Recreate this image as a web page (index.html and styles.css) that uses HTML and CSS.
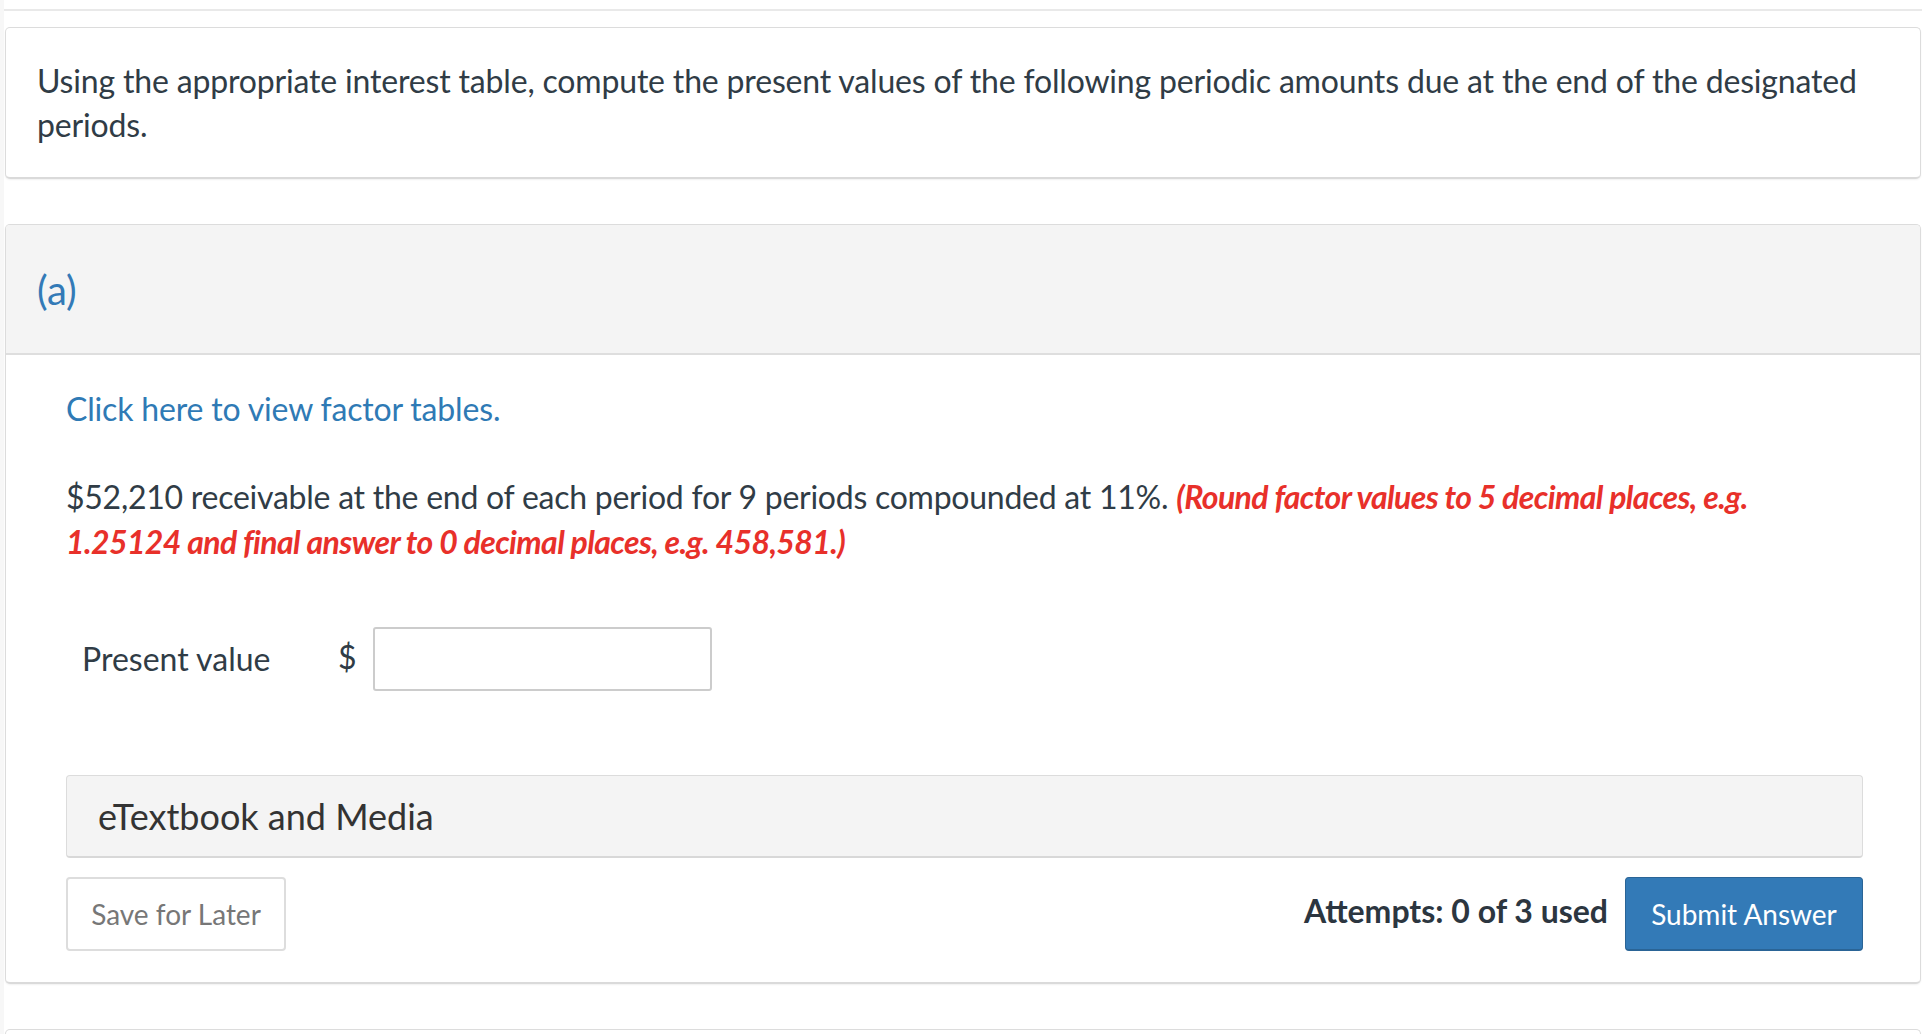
FILE: index.html
```html
<!DOCTYPE html>
<html lang="en">
<head>
<meta charset="utf-8">
<title>Present value question</title>
<link rel="stylesheet" href="styles.css">
</head>
<body>
<div class="page">
  <div class="top-rule"></div>

  <section class="card intro">
    <p>Using the appropriate interest table, compute the present values of the following periodic amounts due at the end of the designated periods.</p>
  </section>

  <section class="card part">
    <header class="part-head">(a)</header>
    <div class="part-body">
      <p class="tables-link"><a href="#">Click here to view factor tables.</a></p>
      <p class="question">$52,210 receivable at the end of each period for 9 periods compounded at 11%. <em class="hint">(Round factor values to 5 decimal places, e.g. </em><em class="hint">1.25124 and final answer to 0 decimal places, e.g. 458,581.)</em></p>

      <div class="answer-row">
        <label class="answer-label" for="pv">Present value</label>
        <span class="currency">$</span>
        <input id="pv" class="answer-input" type="text">
      </div>

      <div class="media-panel">eTextbook and Media</div>

      <div class="actions">
        <button class="btn btn-save" type="button">Save for Later</button>
        <div class="actions-right">
          <span class="attempts">Attempts: 0 of 3 used</span>
          <button class="btn btn-submit" type="button">Submit Answer</button>
        </div>
      </div>
    </div>
  </section>

  <section class="card next"></section>
</div>
</body>
</html>
```
FILE: styles.css
```css
html, body {
  margin: 0;
  padding: 0;
}

body {
  background: #f7f7f7;
  font-family: "Lato", "Open Sans", "Liberation Sans", sans-serif;
  color: #303c46;
  font-size: 32px;
  line-height: 1.4;
  letter-spacing: -0.17px;
  overflow: hidden;
  height: 1034px;
}

.page {
  margin-left: 4px;
  background: #ffffff;
  height: 1034px;
  padding: 0 1px;
  overflow: hidden;
}

.top-rule {
  height: 9px;
  border-bottom: 2px solid #e9e9e9;
  margin: 0 -1px;
}

.card {
  background: #ffffff;
  border: 1px solid #dcdcdc;
  border-bottom: 2px solid #dadada;
  border-radius: 5px;
  box-shadow: 0 1px 2px rgba(0, 0, 0, 0.06);
}

.intro {
  margin-top: 16px;
  padding: 31px 31px 30px;
}

.intro p {
  margin: 0;
  line-height: 44px;
}

.part {
  margin-top: 45px;
  overflow: hidden;
}

.part-head {
  background: #f4f4f4;
  border-bottom: 2px solid #dedede;
  padding: 41px 31px 39px;
  font-size: 40px;
  line-height: 48px;
  color: #337ab7;
  letter-spacing: 0;
}

.part-body {
  padding: 32px 57px 31px 60px;
}

.tables-link {
  margin: 0;
  line-height: 44px;
}

.tables-link a {
  color: #2f7ab5;
  text-decoration: none;
}

.question {
  margin: 43px 0 0;
  line-height: 45px;
  letter-spacing: -0.25px;
}

.hint {
  color: #e8302a;
  font-weight: 700;
  font-style: italic;
  letter-spacing: -0.6px;
}

.answer-row {
  margin-top: 63px;
  display: flex;
  align-items: center;
  padding-left: 16px;
}

.answer-label {
  width: 256px;
  line-height: 44px;
  letter-spacing: 0;
}

.currency {
  width: 35px;
  margin-top: -4px;
}

.answer-input {
  width: 339px;
  height: 64px;
  box-sizing: border-box;
  border: 2px solid #cccccc;
  border-radius: 3px;
  font-family: inherit;
  font-size: 28px;
  padding: 0 12px;
  background: #ffffff;
}

.media-panel {
  margin-top: 84px;
  background: #f4f4f4;
  border: 1px solid #dcdcdc;
  border-bottom: 2px solid #d8d8d8;
  border-radius: 4px;
  padding: 16px 31px 15px;
  font-size: 36px;
  line-height: 49px;
  color: #333333;
  letter-spacing: 0;
}

.actions {
  margin-top: 19px;
  display: flex;
  justify-content: space-between;
  align-items: center;
}

.actions-right {
  display: flex;
  align-items: center;
  gap: 17px;
}

.attempts {
  font-weight: 700;
  color: #2c3640;
  margin-top: -6px;
  letter-spacing: 0;
}

.btn {
  height: 74px;
  box-sizing: border-box;
  font-family: inherit;
  font-size: 28px;
  border-radius: 4px;
  padding: 0;
  white-space: nowrap;
  text-align: center;
  letter-spacing: 0;
  cursor: pointer;
}

.btn-save {
  width: 220px;
  background: #ffffff;
  color: #777777;
  border: 2px solid #dddddd;
}

.btn-submit {
  width: 238px;
  background: #337ab7;
  color: #ffffff;
  border: 1px solid #2a6496;
  border-bottom-width: 2px;
}

.next {
  margin-top: 45px;
  height: 20px;
  border-bottom: none;
  border-radius: 5px 5px 0 0;
}
```
